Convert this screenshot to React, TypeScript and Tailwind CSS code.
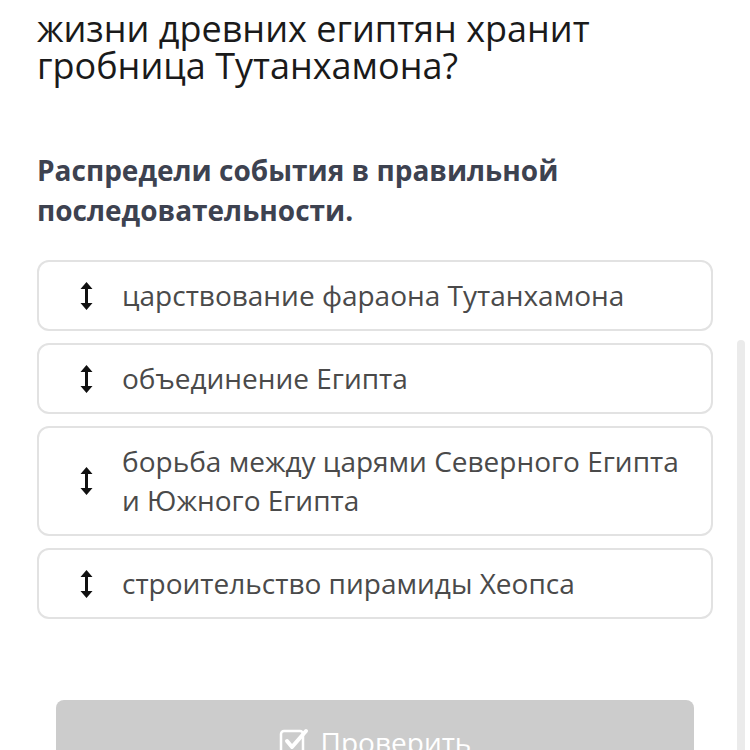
import React from 'react';

const items = [
    'царствование фараона Тутанхамона',
    'объединение Египта',
    'борьба между царями Северного Египта и Южного Египта',
    'строительство пирамиды Хеопса',
];

function DragIcon() {
    return (
        <svg width="13" height="28" viewBox="0 0 13 28" className="shrink-0">
            <path d="M6.5 0 L12.5 7 L8 7 L8 21 L12.5 21 L6.5 28 L0.5 21 L5 21 L5 7 L0.5 7 Z" fill="#111" />
        </svg>
    );
}

function CheckBoxIcon() {
    return (
        <svg width="30" height="30" viewBox="0 0 30 30" className="shrink-0">
            <rect x="2" y="4" width="22" height="22" rx="3" fill="none" stroke="#fff" strokeWidth="2.5" />
            <path d="M8 14 L13 20 L27 4" fill="none" stroke="#fff" strokeWidth="4" strokeLinecap="round" strokeLinejoin="round" />
        </svg>
    );
}

export default function App() {
    return (
        <div className="relative h-[750px] w-[750px] overflow-hidden bg-white font-['Open_Sans',sans-serif]">
            <div className="flex flex-col px-[37px] pt-[10px]">
                <h1 className="text-[36px] leading-[37px] text-[#1a1a1a]">
                    жизни древних египтян хранит
                    <br />
                    гробница Тутанхамона?
                </h1>
                <p className="mt-[66px] text-[28px] font-bold leading-[40px] text-[#3d4250]">
                    Распредели события в правильной
                    <br />
                    последовательности.
                </p>
                <div className="mt-[30px] flex flex-col gap-[12px]">
                    {items.map((t) => (
                        <div
                            key={t}
                            className="flex items-center gap-[29px] rounded-[12px] border-2 border-[#e2e2e2] py-[14px] pl-[41px] pr-[24px]">
                            <DragIcon />
                            <span className="text-[28px] leading-[39px] text-[#4a4a4a]">{t}</span>
                        </div>
                    ))}
                </div>
                <div className="mx-[19px] mt-[81px] flex h-[84px] items-center justify-center gap-[12px] rounded-[8px] bg-[#cccccc]">
                    <CheckBoxIcon />
                    <span className="text-[28px] text-white">Проверить</span>
                </div>
            </div>
            <div className="absolute right-[5px] top-[340px] h-[420px] w-[8px] rounded-t-[4px] bg-[#ebebeb]" />
        </div>
    );
}
